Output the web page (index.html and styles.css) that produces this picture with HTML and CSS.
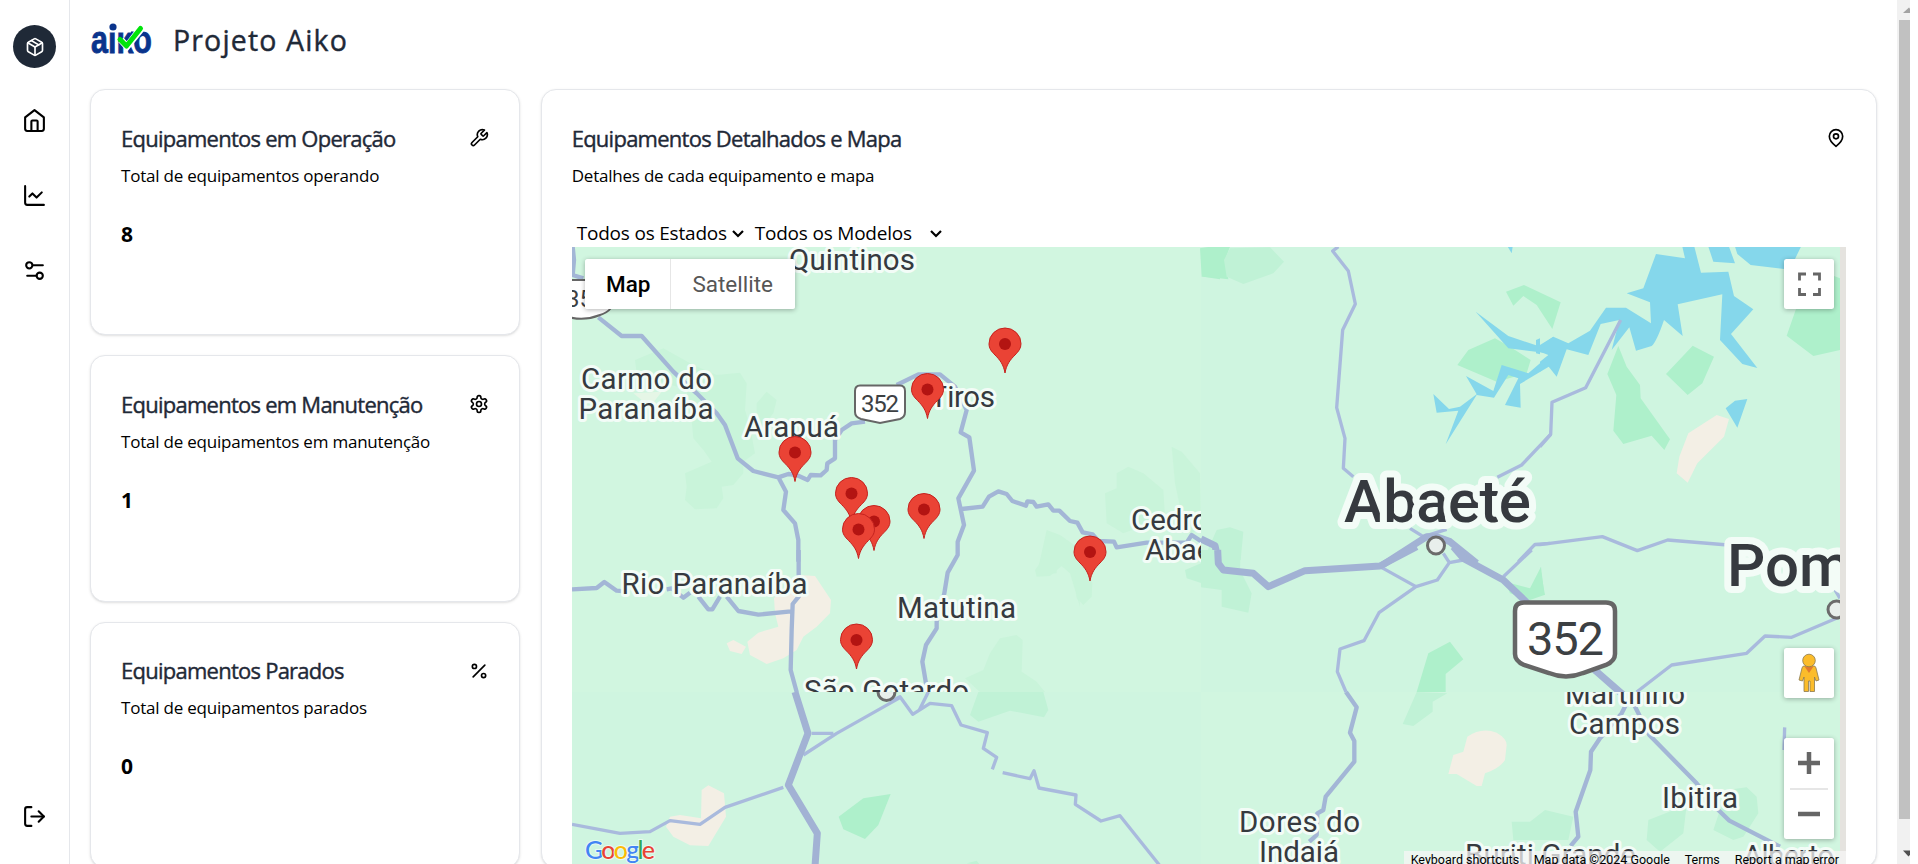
FILE: index.html
```html
<!DOCTYPE html>
<html lang="pt-BR">
<head>
<meta charset="utf-8">
<title>Projeto Aiko</title>
<link rel="stylesheet" href="styles.css">
</head>
<body>
<div class="app">
  <aside class="sidebar">
    <a class="brand" href="#"><svg class="icon icon-sm" viewBox="0 0 24 24"><path d="m7.5 4.27 9 5.15"/><path d="M21 8a2 2 0 0 0-1-1.73l-7-4a2 2 0 0 0-2 0l-7 4A2 2 0 0 0 3 8v8a2 2 0 0 0 1 1.73l7 4a2 2 0 0 0 2 0l7-4A2 2 0 0 0 21 16Z"/><path d="m3.3 7 8.7 5 8.7-5"/><path d="M12 22V12"/></svg></a>
    <nav class="nav">
      <a href="#"><svg class="icon" viewBox="0 0 24 24"><path d="m3 9 9-7 9 7v11a2 2 0 0 1-2 2H5a2 2 0 0 1-2-2z"/><path d="M9 22v-9a1 1 0 0 1 1-1h4a1 1 0 0 1 1 1v9"/></svg></a>
      <a href="#"><svg class="icon" viewBox="0 0 24 24"><path d="M3 3v16a2 2 0 0 0 2 2h16"/><path d="m19 9-5 5-4-4-3 3"/></svg></a>
      <a href="#"><svg class="icon" viewBox="0 0 24 24"><path d="M20 7h-9"/><path d="M14 17H5"/><circle cx="17" cy="17" r="3"/><circle cx="7" cy="7" r="3"/></svg></a>
    </nav>
    <a class="logout" href="#"><svg class="icon" viewBox="0 0 24 24"><path d="M9 21H5a2 2 0 0 1-2-2V5a2 2 0 0 1 2-2h4"/><path d="m16 17 5-5-5-5"/><path d="M21 12H9"/></svg></a>
  </aside>

  <main class="main">
    <header class="header">
      <svg class="logo" viewBox="0 0 62 32">
        <text class="logo-text" x="0" y="29.5" textLength="61" lengthAdjust="spacingAndGlyphs">aiko</text>
        <path d="M18 -2H40V9.500H18z" fill="#fff"/>
        <circle cx="22" cy="4" r="3.600" fill="#0a348c"/>
        <path d="M30 17l6 6.500L50 6" fill="none" stroke="#fff" stroke-width="7"/>
        <path d="M29 16.500l6.500 6.500L49.500 5.500" fill="none" stroke="#00e40b" stroke-width="5" stroke-linecap="round" stroke-linejoin="round"/>
      </svg>
      <h1 class="title">Projeto Aiko</h1>
    </header>

    <div class="grid">
      <section class="stack">
        <article class="card">
          <div class="card-head"><h2>Equipamentos em Operação</h2><svg class="icon icon-sm" viewBox="0 0 24 24"><path d="M14.700 6.300a1 1 0 0 0 0 1.400l1.600 1.600a1 1 0 0 0 1.400 0l3.770-3.770a6 6 0 0 1-7.940 7.940l-6.910 6.910a2.120 2.120 0 0 1-3-3l6.910-6.910a6 6 0 0 1 7.940-7.940l-3.760 3.760z"/></svg></div>
          <p class="desc">Total de equipamentos operando</p>
          <p class="num">8</p>
        </article>
        <article class="card">
          <div class="card-head"><h2>Equipamentos em Manutenção</h2><svg class="icon icon-sm" viewBox="0 0 24 24"><path d="M12.220 2h-.440a2 2 0 0 0-2 2v.180a2 2 0 0 1-1 1.730l-.430.250a2 2 0 0 1-2 0l-.150-.080a2 2 0 0 0-2.730.730l-.220.380a2 2 0 0 0 .730 2.730l.150.100a2 2 0 0 1 1 1.720v.510a2 2 0 0 1-1 1.740l-.150.090a2 2 0 0 0-.730 2.730l.220.380a2 2 0 0 0 2.730.730l.150-.080a2 2 0 0 1 2 0l.430.250a2 2 0 0 1 1 1.730V20a2 2 0 0 0 2 2h.440a2 2 0 0 0 2-2v-.180a2 2 0 0 1 1-1.730l.430-.250a2 2 0 0 1 2 0l.150.080a2 2 0 0 0 2.730-.730l.220-.390a2 2 0 0 0-.730-2.730l-.150-.080a2 2 0 0 1-1-1.740v-.500a2 2 0 0 1 1-1.740l.150-.090a2 2 0 0 0 .730-2.730l-.220-.380a2 2 0 0 0-2.730-.730l-.150.080a2 2 0 0 1-2 0l-.430-.250a2 2 0 0 1-1-1.730V4a2 2 0 0 0-2-2z"/><circle cx="12" cy="12" r="3"/></svg></div>
          <p class="desc">Total de equipamentos em manutenção</p>
          <p class="num">1</p>
        </article>
        <article class="card">
          <div class="card-head"><h2>Equipamentos Parados</h2><svg class="icon icon-sm" viewBox="0 0 24 24"><path d="M19 5 5 19"/><circle cx="6.500" cy="6.500" r="2.500"/><circle cx="17.500" cy="17.500" r="2.500"/></svg></div>
          <p class="desc">Total de equipamentos parados</p>
          <p class="num">0</p>
        </article>
      </section>

      <section class="card card-map">
        <div class="card-head"><h2>Equipamentos Detalhados e Mapa</h2><svg class="icon icon-sm" viewBox="0 0 24 24"><path d="M20 10c0 6-8 12-8 12s-8-6-8-12a8 8 0 0 1 16 0Z"/><circle cx="12" cy="10" r="3"/></svg></div>
        <p class="desc">Detalhes de cada equipamento e mapa</p>
        <div class="filters">
          <span class="select">Todos os Estados<svg class="chev" viewBox="0 0 12 8"><path d="M1 1l5 5 5-5"/></svg></span>
          <span class="select select-models">Todos os Modelos<svg class="chev" viewBox="0 0 12 8"><path d="M1 1l5 5 5-5"/></svg></span>
        </div>

        <div class="map">
          <svg class="map-canvas" viewBox="572 247 1274 617">
            <defs>
              <clipPath id="tile-nw"><path d="M572 247H1201V692H572z"/></clipPath>
              <clipPath id="tile-s"><path d="M572 692H1840V864H572z"/></clipPath>
              <clipPath id="tiles"><path d="M572 247H1840V864H572z"/></clipPath>
              <g id="pin"><path d="M0 0C-1.500-8.500-5-13-10-18C-13.500-21.500-16-24.500-16-29.300A16 15.700 0 0 1 16-29.300C16-24.500 13.500-21.500 10-18C5-13 1.500-8.500 0 0z" fill="#ea4335" stroke="#c5221f"/><circle cy="-29" r="6" fill="#b31412"/></g>
            </defs>
            <path d="M572 247H1846V864H572z" fill="#e5e3df"/>
            <g clip-path="url(#tiles)">
              <path d="M572 247H1840V864H572z" fill="#cff5e0"/>
              <path d="M572 247H1201V692H572z" fill="#d1f6e0"/>
              <path d="M1201 692H1840V864H1201z" fill="#d1f6e0"/>

              <g transform="translate(570 240) scale(.33333)">
                <path class="wood-l" d="M195 360 280 325 370 375 440 405 510 398 530 430 525 510 540 560 555 640 520 665 520 700 490 735 455 740 460 775 440 805 375 808 345 780 350 740 345 700 425 665 400 630 370 595 365 540 350 450 200 400zM560 490 590 455 620 480 610 520 590 545 560 600z"/>
                <path d="M190 460 275 455 240 500z" fill="#e5f6e6"/>
                <path class="road" d="M8 20 12 60 8 105 40 115M85 232 155 288H215L310 395 380 460 440 520 465 555 503 655 550 693 625 712 648 755 640 810 675 850 685 900V965M625 712 655 702 680 705 713 720 722 705 752 706 770 690 772 670 795 655V600L815 570 845 550 885 545"/>
              </g>

              <g transform="translate(570 550) scale(.33333)">
                <path class="town" d="M690 75 735 78 783 150 780 190 740 230 700 260 680 300 640 325 590 342 540 315 532 275 565 248 625 230 615 190 612 145zM470 280 490 270 528 290 515 312 480 303zM395 720 415 706 462 730 468 800 415 888 360 886 310 860 288 830 300 800 330 795 393 805z"/>
                <path class="wood" d="M806 800 880 745 962 732 925 825 885 867 820 838z"/>
                <path class="road" d="M6 118 80 114 103 96 140 122 165 124M290 118 305 115 340 143 360 128M385 140 415 178H427L450 140M470 140 505 183 565 194 663 184M686 0V140L668 162 665 240 662 360 680 426"/>
                <path class="road-s" d="M725 550H790M700 615 800 550 990 443M640 712 465 772 390 823 300 812 240 845 150 850 6 823"/>
                <path class="road-l" d="M675 426 714 550 655 705 742 850 735 950"/>
              </g>

              <g transform="translate(890 240) scale(.33333)">
                <path class="wood-l" d="M845 620 875 635 930 700 933 870 900 880 870 800 855 730zM680 700 715 680 760 700 820 750 825 830 780 850 700 880 650 850 645 760 680 745zM470 870 510 885 560 920 570 1100 540 1000 500 965 500 1000 440 1005z"/>
                <path class="wood" d="M933 55 945 25 990 20V118L940 110z"/>
                <path class="road" d="M20 435 85 403H150L195 440 230 510 212 577 238 592 252 692 205 775 222 855 203 905V945L173 998 163 1060 140 1145V1165L108 1215 97 1265 108 1330V1355M215 807 278 800 297 770 325 754 350 762 367 783 408 797 412 784 430 786 440 800 475 793 490 812H508L540 843 562 848 578 877 608 883 625 903 672 905 680 922 770 908H890L905 885 935 905"/>
              </g>

              <g transform="translate(890 550) scale(.33333)">
                <path class="wood-l" d="M300 310 330 265 380 255 398 270 395 365 440 395 465 426H270L225 385 280 360zM435 60 480 0H560L607 100 605 140 580 165 560 145 555 60 530 35 480 78 440 80z"/>
                <path class="wood-m" d="M265 426H460L475 480 462 502 360 482 265 515 240 495zM885 60 933 40 990 10V118L890 85zM230 940 260 932 270 945z"/>
                <path class="road-s" d="M115 426 88 480M0 455 30 440 68 493 120 460 185 467 213 525 292 548 280 595 320 622 307 658M338 668 420 686 432 662 447 714 558 735 556 763 633 813 690 797 808 945"/>
              </g>

              <g transform="translate(1210 240) scale(.33333)">
                <path class="wood" d="M-30 25 0 20H60L45 60 55 118 0 112-25 110zM888 155 942 135 1052 187 1027 267 980 195 940 168 910 197zM742 375 775 330 855 295 900 320 962 360 950 400 860 425z"/>
                <path class="wood-m" d="M60 25 180 22 222 65 190 100 100 132 50 110 42 60zM20 870 60 862 100 875 92 960H-20z"/>
                <path class="water" d="M797 215 895 288 985 318 1030 290V342L895 325zM768 408 850 453 875 375 955 400 1025 340V375L930 432 932 503 885 495 925 415 895 405 852 473 800 465 707 613 745 512 680 518 670 462 717 507 750 500 800 463zM893 20H908L905 40z"/>
                <path class="road-s" d="M385 20 368 33 415 93 436 192 398 270 380 503 405 595 400 685 430 710M1022 583 935 675 862 712M600 865 640 890 710 868M925 965 975 913 1020 910"/>
                <path class="road-l" d="M-27 897 15 917 25 960M510 980 650 890 678 890 720 905 800 970"/>
              </g>

              <g transform="translate(1210 550) scale(.33333)">
                <path class="wood-m" d="M-27 0H92L90 60 125 130 115 188 35 170V120L-27 112zM620 426 712 430 668 455V485L610 528 578 522zM905 815 960 815 1005 780 1090 800 1075 870H910z"/>
                <path class="wood" d="M655 310 720 275 760 328 707 372V426H620zM885 95 960 115 993 50 1003 135 960 150 900 130z"/>
                <path class="town" d="M772 560Q815 530 860 548 890 565 890 585L885 630Q870 655 825 670L815 708H800L740 672H715L730 615 760 605z"/>
                <path class="road-s" d="M510 50 618 110M700 10 718 38 682 90 618 110 507 188 462 272 390 297 382 365 408 426M880 80 965 0M718 38 760 30"/>
                <path class="road" d="M408 426 440 472 420 548 433 573V635L347 740 340 780 322 790 320 855 298 875"/>
                <path class="road-l" d="M23 0 25 40 40 60 130 70 175 110 285 62 510 48 620-10M730-10 760 25 880 90 945 152 1160 365 1240 435"/>
              </g>

              <g transform="translate(1540 240) scale(.33333)">
                <path class="wood" d="M235 318 260 380 300 435 302 475 390 598 373 630 335 587 250 612 220 572 229 465 202 402zM458 317 522 350 487 430 443 465 378 402zM768 207 740 287 820 348 900 330V115L880 107z"/>
                <path class="water" d="M348 42 435 55 427 20H463L483 98 565 95 582 168 640 208 573 282 652 384 607 372 540 300 547 163 413 193 428 288 372 240Q350 305 335 318L288 332 268 262 215 330 238 240 182 252 145 345 80 328 50 410 22 375 0 395V365L25 345 0 335V318L40 290 85 310 150 272 198 203H258L333 250 330 187 260 160 310 145zM505 20H567L585 70 520 65zM585 20H783L765 57 732 87 632 75 592 42zM557 505 585 482 622 477 592 563zM-12 300 0 295V343L-12 340z"/>
                <path class="town" d="M530 525 567 537 552 590 472 670 443 728 410 700 418 650 445 580z"/>
                <path class="road-s" d="M242 240 137 443 36 487 32 583 0 620M-15 914 0 914 187 890 292 932 383 900 600 918"/>
              </g>

              <g transform="translate(1540 550) scale(.33333)">
                <path class="wood-m" d="M320 870 325 810 440 765 430 850 360 905zM560 720 620 712 650 740 655 790 610 860 580 870 520 840z"/>
                <path class="wood" d="M0 50 15 135H0z"/>
                <path class="road-s" d="M290 426 395 345 620 310 675 258 755 262 900 200M885 120 900 145M734 532 732 600"/>
                <path class="road" d="M265 450 245 490 180 565 153 605 151 660 107 785 115 860 92 888M275 450 328 555 470 700 535 780 568 812 720 890"/>
              </g>

              <path class="shield" d="M560 280H586Q592 280 592 286V302Q594 309 611 308Q607 313 600 315Q580 323 560 314z"/>
              <text class="num-sm" x="566" y="306.500">35</text>
              <path class="shield" d="M860 385.500H900Q905 385.500 905 391V412Q905 417 900 419L880 423 861 419Q855 417 855 412V391Q855 385.500 860 385.500z"/>
              <text class="num-sm" x="861" y="411.500" textLength="38">352</text>

              <g class="city">
                <text x="789" y="269.500" textLength="126">Quintinos</text>
                <text x="581" y="388.500" textLength="131">Carmo do</text>
                <text x="578.500" y="418.500" textLength="135">Paranaíba</text>
                <text x="744" y="436.500" textLength="95">Arapuá</text>
                <text x="930" y="407" textLength="65">Tiros</text>
                <text x="621.500" y="593.500" textLength="186">Rio Paranaíba</text>
                <text x="897" y="617.500" textLength="119">Matutina</text>
                <g clip-path="url(#tile-nw)">
                  <text x="804" y="701" textLength="165">São Gotardo</text>
                  <text x="1131" y="529.500">Cedro</text>
                  <text x="1145" y="559.500">Abaeté</text>
                </g>
                <text x="1239" y="831.500" textLength="121">Dores do</text>
                <text x="1259" y="861.500" textLength="80">Indaiá</text>
                <text x="1465" y="865" textLength="171">Buriti Grande</text>
                <text x="1743" y="866" textLength="91">Alberto</text>
                <g clip-path="url(#tile-s)"><text x="1565" y="703.500" textLength="120">Martinho</text></g>
                <text x="1569" y="734" textLength="111">Campos</text>
                <text x="1662" y="807.500" textLength="76">Ibitira</text>
              </g>
              <g class="city city-lg">
                <text x="1344" y="521.500" textLength="187">Abaeté</text>
                <text x="1727" y="586">Pompéu</text>
              </g>
              <g fill="#e8efec" stroke="#6b6b6b" stroke-width="3">
                <circle cx="1436" cy="545.500" r="8.500"/>
                <circle cx="1836.500" cy="609.500" r="8.500"/>
                <circle clip-path="url(#tile-s)" cx="886.500" cy="692" r="8.500"/>
              </g>
              <path class="shield shield-lg" d="M1524 602.500H1606Q1615 602.500 1615 611V654Q1615 661 1606 665L1583 673Q1566 680 1549 673L1524 665Q1515 661 1515 654V611Q1515 602.500 1524 602.500z"/>
              <text class="num-lg" x="1527" y="655" textLength="77">352</text>
            </g>

            <use href="#pin" x="1005" y="373"/>
            <use href="#pin" x="927.500" y="418.500"/>
            <use href="#pin" x="795" y="481.500"/>
            <use href="#pin" x="851.500" y="522.500"/>
            <use href="#pin" x="924" y="538.500"/>
            <use href="#pin" x="874" y="550.500"/>
            <use href="#pin" x="858.500" y="558.500"/>
            <use href="#pin" x="1090" y="581"/>
            <use href="#pin" x="856.500" y="669"/>

            <text class="google" x="585" y="859" textLength="70"><tspan fill="#4285f4">G</tspan><tspan fill="#ea4335">o</tspan><tspan fill="#fbbc05">o</tspan><tspan fill="#4285f4">g</tspan><tspan fill="#34a853">l</tspan><tspan fill="#ea4335">e</tspan></text>
          </svg>

          <div class="map-type"><button class="on">Map</button><button>Satellite</button></div>
          <div class="map-tools">
            <button class="tool"><svg width="24" height="24" viewBox="0 0 24 24"><path d="M2.500 8.500V2h6.500M16 2h6.500v6.500M22.500 16v6.500H16M9 22.500H2.500V16" fill="none" stroke="#666" stroke-width="2.800"/></svg></button>
            <div class="tools-low">
              <button class="tool"><svg width="22" height="40" viewBox="0 0 22 40"><path d="M6 13H16Q17.500 13 18 15L21 27 18 28 16.500 24V38.500H12V28H10.500V38.500H6V24L4.500 28 1 27 4 15Q4.500 13 6 13z" fill="#fbbc2b" stroke="#8a7a50" stroke-width=".8"/><path d="M6.500 13.500H15.500L11 20z" fill="#e27a2e"/><circle cx="11" cy="7.500" r="6.300" fill="#fbbc2b" stroke="#8a7a50" stroke-width=".8"/></svg></button>
              <div class="zoom">
                <button><svg width="22" height="22" viewBox="0 0 22 22"><path d="M0 11H22M11 0V22" stroke="#666" stroke-width="4.500"/></svg></button>
                <button><svg width="22" height="22" viewBox="0 0 22 22"><path d="M0 11H22" stroke="#666" stroke-width="4.500"/></svg></button>
              </div>
            </div>
          </div>
          <div class="legal"><span class="l1">Keyboard shortcuts</span><span class="l2">Map data ©2024 Google</span><span class="l3">Terms</span><span class="l4">Report a map error</span></div>
        </div>
      </section>
    </div>
  </main>

  <div class="scrollbar">
    <svg class="arrow" viewBox="0 0 13 20"><path d="M6 13 12 7.500 18 13z" fill="#a3a3a3"/></svg>
    <div class="thumb"></div>
    <svg class="arrow arrow-down" viewBox="0 0 13 20"><path d="M6 6.500 11.500 12.500 17 6.500z" fill="#505050"/></svg>
  </div>
</div>
</body>
</html>
```
FILE: styles.css
```css
* { box-sizing: border-box; }
body { margin: 0; background: #fff; color: #000; font-family: "Open Sans", "Noto Sans", sans-serif; }
h1, h2, p { margin: 0; font-weight: 500; }
button { border: 0; padding: 0; background: #fff; font-family: Roboto, sans-serif; }
a { color: inherit; display: flex; }

.app { display: flex; width: 1910px; height: 864px; overflow: hidden; }
.icon { width: 25px; height: 25px; flex: none; fill: none; stroke: currentColor; stroke-width: 2; stroke-linecap: round; stroke-linejoin: round; }
.icon-sm { width: 20px; height: 20px; }

.sidebar { width: 70px; flex: none; border-right: 1px solid #e5e7eb; display: flex; flex-direction: column; align-items: center; padding: 25px 0 35px; }
.brand { width: 43px; height: 43px; border-radius: 50%; background: #1f2937; color: #fff; align-items: center; justify-content: center; }
.nav { display: flex; flex-direction: column; gap: 49.800px; margin-top: 40px; }
.logout { margin-top: auto; }

.main { width: 1827px; flex: none; padding: 20px 20px 0; }
.header { display: flex; align-items: flex-start; height: 69px; }
.logo { width: 62px; height: 32px; margin: 3px 0 0 1px; overflow: visible; }
.logo-text { font: bold 38px "Liberation Sans", sans-serif; fill: #0a348c; stroke: #0a348c; stroke-width: .8; }
.title { margin-left: 20px; font-size: 28.500px; line-height: 40px; color: #1f2937; letter-spacing: 1.150px; -webkit-text-stroke: .4px #1f2937; }

.grid { display: grid; grid-template-columns: 430px 1336px; gap: 20.700px; align-items: start; }
.stack { display: flex; flex-direction: column; gap: 20px; }
.card { height: 246.400px; border: 1px solid #e5e7eb; border-radius: 15px; padding: 33px 30px 0; background: #fff; box-shadow: 0 1px 3px rgba(0,0,0,.1), 0 1px 2px -1px rgba(0,0,0,.1); }
.card-map { height: 779.200px; }
.card-head { display: flex; justify-content: space-between; align-items: center; height: 30px; }
.card h2 { font-size: 22px; line-height: 30px; height: 31px; color: #1f2937; letter-spacing: -.750px; white-space: nowrap; -webkit-text-stroke: .4px #1f2937; }
.desc { font-size: 17px; line-height: 25px; margin-top: 9.500px; font-weight: 400; letter-spacing: -.220px; white-space: nowrap; }
.num { font-size: 21px; line-height: 28px; font-weight: 700; margin-top: 32px; }

.filters { display: flex; gap: 11px; margin-top: 32.500px; padding-left: 5px; height: 27px; }
.select { display: flex; align-items: center; width: 167px; font-size: 19px; letter-spacing: -.200px; line-height: 27px; white-space: nowrap; justify-content: space-between; }
.select-models { width: 187px; }
.chev { width: 12px; height: 8px; flex: none; fill: none; stroke: #000; stroke-width: 2.200; }

.map { position: relative; width: 1274px; height: 617px; }
.map-canvas { display: block; width: 1274px; height: 617px; font-family: Roboto, sans-serif; }
.wood { fill: #aef0cb; }
.wood-m { fill: #c0f2d6; }
.wood-l { fill: #c9f4da; }
.water { fill: #85d7eb; }
.town { fill: #f3efe5; }
.road, .road-s, .road-l { fill: none; stroke: #a3b6d6; stroke-width: 13; stroke-linejoin: round; }
.road-s { stroke: #a9badd; stroke-width: 10; }
.road-l { stroke: #a2b2d4; stroke-width: 21; }
.shield { fill: #fff; stroke: #666; stroke-width: 2; }
.shield-lg { stroke-width: 4.500; }
.num-sm { font-size: 24px; fill: #3c4043; }
.num-lg { font-size: 47px; fill: #3c4043; }
.city { font-size: 29.500px; fill: #363a3f; stroke: #f3fcf7; stroke-width: 6; stroke-linejoin: round; paint-order: stroke; }
.city-lg { font-size: 60px; font-weight: 500; stroke-width: 14; }
.google { font: 500 25px Lato, sans-serif; stroke: #e9faf1; stroke-width: 2; paint-order: stroke; }

.map-type { position: absolute; left: 13px; top: 12px; display: flex; height: 50px; box-shadow: 0 1px 5px rgba(0,0,0,.3); border-radius: 2.500px; overflow: hidden; }
.map-type button { width: 124px; font-size: 22.500px; color: #565656; }
.map-type .on { width: 86px; padding-left: 2px; font-weight: 500; color: #000; border-right: 1px solid #e6e6e6; }
.map-tools { position: absolute; right: 12px; top: 12px; height: 580px; display: flex; flex-direction: column; justify-content: space-between; }
.tool { width: 50px; height: 50px; display: flex; align-items: center; justify-content: center; box-shadow: 0 1px 5px rgba(0,0,0,.3); border-radius: 2.500px; }
.tools-low { display: flex; flex-direction: column; gap: 40px; }
.zoom { width: 50px; height: 101px; background: #fff; padding: 0 6px; box-shadow: 0 1px 5px rgba(0,0,0,.3); border-radius: 2.500px; }
.zoom button { display: flex; width: 38px; height: 50px; align-items: center; justify-content: center; }
.zoom button + button { border-top: 2px solid #e6e6e6; }
.legal { position: absolute; right: 0; top: 604px; height: 13px; width: 442px; overflow: hidden; background: rgba(245,245,245,.75); display: flex; font: 12.500px/18px Roboto, sans-serif; white-space: nowrap; padding-left: 7px; }
.l1 { width: 123px; }
.l2 { width: 151px; }
.l3 { width: 50px; }

.scrollbar { width: 13px; flex: none; background: #f1f1f1; display: flex; flex-direction: column; }
.arrow { width: 13px; height: 20px; display: block; }
.thumb { height: 799px; margin-left: 2px; background: #c1c1c1; }
.arrow-down { margin-top: 25px; }
```
